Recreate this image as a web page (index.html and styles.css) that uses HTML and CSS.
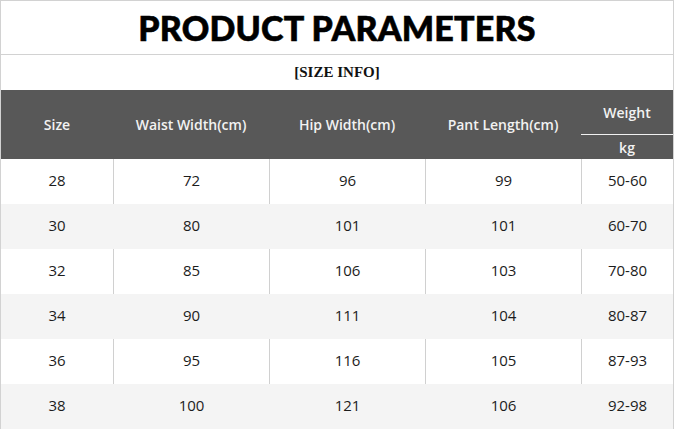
FILE: index.html
```html
<!DOCTYPE html>
<html>
<head>
<meta charset="utf-8">
<link rel="stylesheet" href="styles.css">
</head>
<body>
<div class="sheet">
  <div class="title">PRODUCT PARAMETERS</div>
  <div class="subtitle">[SIZE INFO]</div>
  <div class="head">
    <div class="hcell">Size</div>
    <div class="hcell">Waist Width(cm)</div>
    <div class="hcell">Hip Width(cm)</div>
    <div class="hcell">Pant Length(cm)</div>
    <div class="hcell weight">
      <div class="wtop">Weight</div>
      <div class="wbot">kg</div>
    </div>
  </div>
  <div class="row odd"><div class="cell">28</div><div class="cell">72</div><div class="cell">96</div><div class="cell">99</div><div class="cell">50-60</div></div>
  <div class="row even"><div class="cell">30</div><div class="cell">80</div><div class="cell">101</div><div class="cell">101</div><div class="cell">60-70</div></div>
  <div class="row odd"><div class="cell">32</div><div class="cell">85</div><div class="cell">106</div><div class="cell">103</div><div class="cell">70-80</div></div>
  <div class="row even"><div class="cell">34</div><div class="cell">90</div><div class="cell">111</div><div class="cell">104</div><div class="cell">80-87</div></div>
  <div class="row odd"><div class="cell">36</div><div class="cell">95</div><div class="cell">116</div><div class="cell">105</div><div class="cell">87-93</div></div>
  <div class="row even"><div class="cell">38</div><div class="cell">100</div><div class="cell">121</div><div class="cell">106</div><div class="cell">92-98</div></div>
</div>
</body>
</html>
```
FILE: styles.css
```css
html, body {
  margin: 0;
  padding: 0;
  background: #ffffff;
}
.sheet {
  width: 674px;
  box-sizing: border-box;
  border: 1px solid #d2d2d2;
  border-bottom: none;
  font-family: "Open Sans", "Noto Sans", sans-serif;
}
.title {
  height: 53px;
  border-bottom: 1px solid #d2d2d2;
  display: flex;
  align-items: center;
  justify-content: center;
  font-family: "Lato", "Open Sans", sans-serif;
  font-weight: 900;
  font-size: 34px;
  letter-spacing: 0.2px;
  color: #000;
  -webkit-text-stroke: 0.6px #000;
}
.subtitle {
  height: 35px;
  display: flex;
  align-items: center;
  justify-content: center;
  font-family: "Liberation Serif", serif;
  font-weight: bold;
  font-size: 15px;
  color: #111;
}
.head, .row {
  display: grid;
  grid-template-columns: 112px 156px 156px 156px 92px;
}
.head {
  height: 69px;
  background: #585858;
  color: #f2f2f2;
  font-size: 14px;
  font-weight: 600;
}
.hcell {
  display: flex;
  align-items: center;
  justify-content: center;
}
.hcell.weight {
  flex-direction: column;
  align-items: stretch;
}
.wtop {
  height: 44px;
  border-bottom: 1px solid #f0f0f0;
  display: flex;
  align-items: center;
  justify-content: center;
}
.wbot {
  flex: 1;
  display: flex;
  align-items: center;
  justify-content: center;
}
.row {
  height: 45px;
  font-size: 15px;
  color: #1c1c1c;
}
.row.even {
  background: #f4f4f4;
}
.cell {
  display: flex;
  align-items: center;
  justify-content: center;
  padding-bottom: 3px;
}
.row .cell + .cell {
  border-left: 1px solid transparent;
}
.row.odd .cell + .cell {
  border-left-color: #d0d0d0;
}
```
